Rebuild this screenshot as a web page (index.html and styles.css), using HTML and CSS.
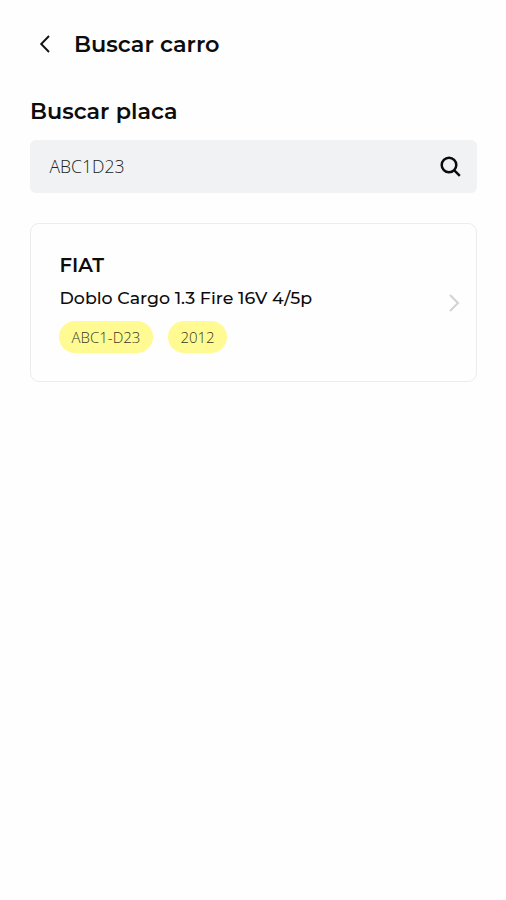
FILE: index.html
```html
<!DOCTYPE html>
<html lang="pt-BR">
<head>
<meta charset="utf-8">
<title>Buscar carro</title>
<link rel="stylesheet" href="styles.css">
</head>
<body>
<main class="screen">
  <header class="topbar">
    <svg class="back" viewBox="0 0 12 20" fill="none"><path d="M10 2L2.2 10L10 18"/></svg>
    <h1 class="title">Buscar carro</h1>
  </header>
  <h2 class="label">Buscar placa</h2>
  <div class="search">
    <span class="value">ABC1D23</span>
    <svg class="lens" viewBox="0 0 22 22" fill="none"><circle cx="9" cy="9" r="7.3"/><path d="M14.3 14.3L19.8 19.8"/></svg>
  </div>
  <article class="card">
    <div class="info">
      <h3 class="brand">FIAT</h3>
      <p class="model">Doblo Cargo 1.3 Fire 16V 4/5p</p>
      <div class="tags">
        <span class="tag plate">ABC1-D23</span>
        <span class="tag year">2012</span>
      </div>
    </div>
    <svg class="next" viewBox="0 0 12 20" fill="none"><path d="M2 2L10 10L2 18"/></svg>
  </article>
</main>
</body>
</html>
```

FILE: styles.css
```css
* { box-sizing: border-box; }
body {
  margin: 0;
  background: #fefefe;
  color: #0c0c0c;
  font-family: Montserrat, Inter, sans-serif;
}
h1, h2, h3, p { margin: 0; }
.screen { padding: 30px 29px 0 30px; }
.topbar {
  display: flex;
  align-items: center;
  height: 28px;
  padding-left: 9px;
}
.back { width: 12px; height: 20px; stroke: #111; stroke-width: 1.9; }
.title, .label {
  font-size: 22.4px;
  line-height: 28px;
  font-weight: 600;
  white-space: nowrap;
}
.title { margin-left: 23px; }
.label { margin-top: 39px; font-size: 22.3px; }
.search {
  display: flex;
  align-items: center;
  justify-content: space-between;
  height: 53px;
  margin-top: 15px;
  padding: 0 15px 0 19.5px;
  border-radius: 6px;
  background: #f0f2f4;
}
.value {
  padding-bottom: 2px;
  font: 350 17.6px/24px "Open Sans", sans-serif;
  color: #222;
}
.lens { width: 22px; height: 22px; stroke: #0c0c0c; stroke-width: 2.5; }
.card {
  display: flex;
  align-items: center;
  justify-content: space-between;
  height: 159px;
  margin-top: 30px;
  padding: 0 16px 0 28px;
  border: 1.5px solid #ececec;
  border-radius: 9px;
}
.brand, .model { padding-left: .5px; }
.brand { font-size: 19.6px; line-height: 26px; font-weight: 600; }
.model {
  margin-top: 7px;
  font-size: 17.4px;
  line-height: 26px;
  font-weight: 500;
  white-space: nowrap;
}
.tags { display: flex; gap: 15px; margin-top: 10px; }
.tag {
  height: 32px;
  border-radius: 16px;
  background: #fffa91;
  color: #3a381f;
  font: 350 15px/33px "Open Sans", sans-serif;
  text-align: center;
}
.plate { width: 94px; }
.year { width: 59px; }
.next { width: 12px; height: 20px; stroke: #d2d2d2; stroke-width: 2; }
```
